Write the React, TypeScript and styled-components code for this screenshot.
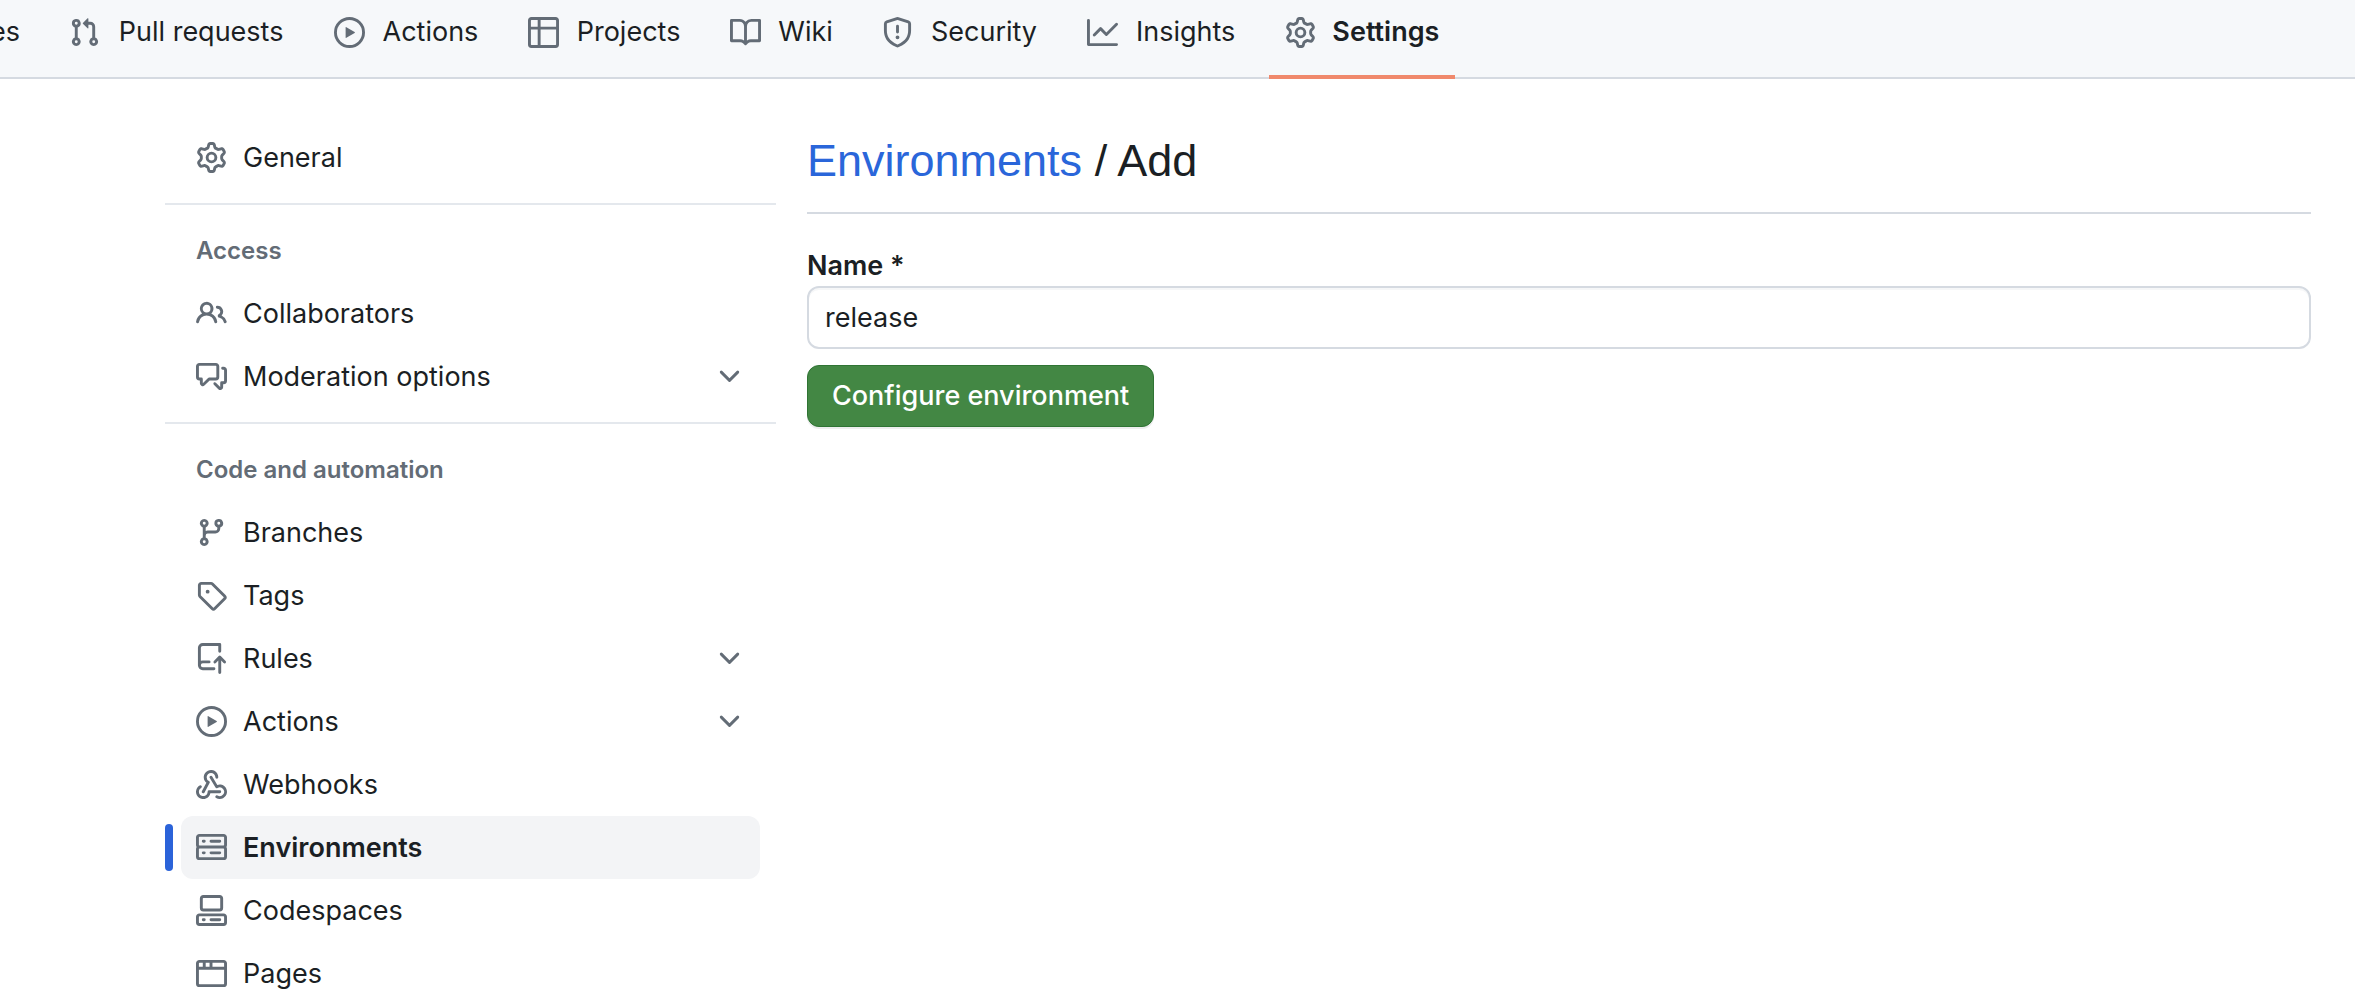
import React, { useState } from "react";
import styled, { createGlobalStyle } from "styled-components";

const color = {
  text: "#1b1f24",
  muted: "#636c76",
  canvas: "#ffffff",
  subtle: "#f6f8fa",
  selected: "#f3f4f6",
  border: "#d5dae1",
  borderMuted: "#e4e8ed",
  link: "#2a66da",
  accent: "#2b63d9",
  underline: "#f0896c",
  primary: "#438744",
};

const GlobalStyle = createGlobalStyle`
  *, *::before, *::after { box-sizing: border-box; }
  body {
    margin: 0;
    background: ${color.canvas};
    color: ${color.text};
    font-family: Inter, "Liberation Sans", sans-serif;
    font-size: 27px;
    line-height: 40px;
    overflow: hidden;
  }
`;

const paths = {
  issue:
    "M8 9.5a1.5 1.5 0 1 0 0-3 1.5 1.5 0 0 0 0 3Z M8 0a8 8 0 1 1 0 16A8 8 0 0 1 8 0ZM1.5 8a6.5 6.5 0 1 0 13 0 6.5 6.5 0 0 0-13 0Z",
  pull:
    "M1.5 3.25a2.25 2.25 0 1 1 3 2.122v5.256a2.251 2.251 0 1 1-1.5 0V5.372A2.25 2.25 0 0 1 1.5 3.25Zm5.677-.177L9.573.677A.25.25 0 0 1 10 .854V2.5h1A2.5 2.5 0 0 1 13.5 5v5.628a2.251 2.251 0 1 1-1.5 0V5a1 1 0 0 0-1-1h-1v1.646a.25.25 0 0 1-.427.177L7.177 3.427a.25.25 0 0 1 0-.354ZM3.75 2.5a.75.75 0 1 0 0 1.5.75.75 0 0 0 0-1.5Zm0 9.5a.75.75 0 1 0 0 1.5.75.75 0 0 0 0-1.5Zm8.25.75a.75.75 0 1 0 1.5 0 .75.75 0 0 0-1.5 0Z",
  play:
    "M8 0a8 8 0 1 1 0 16A8 8 0 0 1 8 0ZM1.5 8a6.5 6.5 0 1 0 13 0 6.5 6.5 0 0 0-13 0Zm4.879-2.773 4.264 2.559a.25.25 0 0 1 0 .428l-4.264 2.559A.25.25 0 0 1 6 10.559V5.442a.25.25 0 0 1 .379-.215Z",
  table:
    "M0 1.75C0 .784.784 0 1.75 0h12.5C15.216 0 16 .784 16 1.75v12.5A1.75 1.75 0 0 1 14.25 16H1.75A1.75 1.75 0 0 1 0 14.25ZM6.5 6.5v8h7.75a.25.25 0 0 0 .25-.25V6.5Zm8-1.5V1.75a.25.25 0 0 0-.25-.25H6.5V5Zm-13 1.5v7.75c0 .138.112.25.25.25H5v-8ZM5 5V1.5H1.75a.25.25 0 0 0-.25.25V5Z",
  book:
    "M0 1.75A.75.75 0 0 1 .75 1h4.253c1.227 0 2.317.59 3 1.501A3.743 3.743 0 0 1 11.006 1h4.245a.75.75 0 0 1 .75.75v10.5a.75.75 0 0 1-.75.75h-4.507a2.25 2.25 0 0 0-1.591.659l-.622.621a.75.75 0 0 1-1.06 0l-.622-.621A2.25 2.25 0 0 0 5.258 13H.75a.75.75 0 0 1-.75-.75Zm7.251 10.324.004-5.073-.002-2.253A2.25 2.25 0 0 0 5.003 2.5H1.5v9h3.757a3.75 3.75 0 0 1 1.994.574ZM8.755 4.75l-.004 7.322a3.752 3.752 0 0 1 1.992-.572H14.5v-9h-3.495a2.25 2.25 0 0 0-2.25 2.25Z",
  shield:
    "M7.467.133a1.748 1.748 0 0 1 1.066 0l5.25 1.68A1.75 1.75 0 0 1 15 3.48V7c0 1.566-.32 3.182-1.303 4.682-.983 1.498-2.585 2.813-5.032 3.855a1.697 1.697 0 0 1-1.33 0c-2.447-1.042-4.049-2.357-5.032-3.855C1.32 10.182 1 8.566 1 7V3.48a1.75 1.75 0 0 1 1.217-1.667Zm.61 1.429a.25.25 0 0 0-.153 0l-5.25 1.68a.25.25 0 0 0-.174.238V7c0 1.358.275 2.666 1.057 3.86.784 1.194 2.121 2.34 4.366 3.297a.196.196 0 0 0 .154 0c2.245-.956 3.582-2.104 4.366-3.298C13.225 9.666 13.5 8.36 13.5 7V3.48a.251.251 0 0 0-.174-.237l-5.25-1.68ZM8.75 4.75v3a.75.75 0 0 1-1.5 0v-3a.75.75 0 0 1 1.5 0ZM9 10.5a1 1 0 1 1-2 0 1 1 0 0 1 2 0Z",
  graph:
    "M1.5 1.75V13.5h13.75a.75.75 0 0 1 0 1.5H.75a.75.75 0 0 1-.75-.75V1.75a.75.75 0 0 1 1.5 0Zm14.28 2.53-5.25 5.25a.75.75 0 0 1-1.06 0L7 7.06 4.28 9.78a.751.751 0 0 1-1.042-.018.751.751 0 0 1-.018-1.042l3.25-3.25a.75.75 0 0 1 1.06 0L10 7.94l4.72-4.72a.751.751 0 0 1 1.042.018.751.751 0 0 1 .018 1.042Z",
  gear:
    "M8 0a8.2 8.2 0 0 1 .701.031C9.444.095 9.99.645 10.16 1.29l.288 1.107c.018.066.079.158.212.224.231.114.454.243.668.386.123.082.233.09.299.071l1.103-.303c.644-.176 1.392.021 1.82.63.27.385.506.792.704 1.218.315.675.111 1.422-.364 1.891l-.814.806c-.049.048-.098.147-.088.294.016.257.016.515 0 .772-.01.147.038.246.088.294l.814.806c.475.469.679 1.216.364 1.891a7.977 7.977 0 0 1-.704 1.217c-.428.61-1.176.807-1.82.63l-1.102-.302c-.067-.019-.177-.011-.3.071a5.909 5.909 0 0 1-.668.386c-.133.066-.194.158-.211.224l-.29 1.106c-.168.646-.715 1.196-1.458 1.26a8.006 8.006 0 0 1-1.402 0c-.743-.064-1.289-.614-1.458-1.26l-.289-1.106c-.018-.066-.079-.158-.212-.224a5.738 5.738 0 0 1-.668-.386c-.123-.082-.233-.09-.299-.071l-1.103.303c-.644.176-1.392-.021-1.82-.63a8.12 8.12 0 0 1-.704-1.218c-.315-.675-.111-1.422.363-1.891l.815-.806c.05-.048.098-.147.088-.294a6.214 6.214 0 0 1 0-.772c.01-.147-.038-.246-.088-.294l-.815-.806C.635 6.045.431 5.298.746 4.623a7.92 7.92 0 0 1 .704-1.217c.428-.61 1.176-.807 1.82-.63l1.102.302c.067.019.177.011.3-.071.214-.143.437-.272.668-.386.133-.066.194-.158.211-.224l.29-1.106C6.009.645 6.556.095 7.299.03 7.53.01 7.764 0 8 0Zm-.571 1.525c-.036.003-.108.036-.137.146l-.289 1.105c-.147.561-.549.967-.998 1.189-.173.086-.34.183-.5.29-.417.278-.97.423-1.529.27l-1.103-.303c-.109-.03-.175.016-.195.045-.22.312-.412.644-.573.99-.014.031-.021.11.059.19l.815.806c.411.406.562.957.53 1.456a4.709 4.709 0 0 0 0 .582c.032.499-.119 1.05-.53 1.456l-.815.806c-.081.08-.073.159-.059.19.162.346.353.677.573.989.02.03.085.076.195.046l1.102-.303c.56-.153 1.113-.008 1.53.27.161.107.328.204.501.29.447.222.85.629.997 1.189l.289 1.105c.029.109.101.143.137.146a6.6 6.6 0 0 0 1.142 0c.036-.003.108-.036.137-.146l.289-1.105c.147-.561.549-.967.998-1.189.173-.086.34-.183.5-.29.417-.278.97-.423 1.529-.27l1.103.303c.109.029.175-.016.195-.045.22-.313.411-.644.573-.99.014-.031.021-.11-.059-.19l-.815-.806c-.411-.406-.562-.957-.53-1.456a4.709 4.709 0 0 0 0-.582c-.032-.499.119-1.05.53-1.456l.815-.806c.081-.08.073-.159.059-.19a6.464 6.464 0 0 0-.573-.989c-.02-.03-.085-.076-.195-.046l-1.102.303c-.56.153-1.113.008-1.53-.27a4.44 4.44 0 0 0-.501-.29c-.447-.222-.85-.629-.997-1.189l-.289-1.105c-.029-.11-.101-.143-.137-.146a6.6 6.6 0 0 0-1.142 0ZM11 8a3 3 0 1 1-6 0 3 3 0 0 1 6 0ZM9.5 8a1.5 1.5 0 1 0-3.001.001A1.5 1.5 0 0 0 9.5 8Z",
  people:
    "M2 5.5a3.5 3.5 0 1 1 5.898 2.549 5.508 5.508 0 0 1 3.034 4.084.75.75 0 1 1-1.482.235 4 4 0 0 0-7.9 0 .75.75 0 0 1-1.482-.236A5.507 5.507 0 0 1 3.102 8.05 3.493 3.493 0 0 1 2 5.5ZM11 4a3.001 3.001 0 0 1 2.22 5.018 5.01 5.01 0 0 1 2.56 3.012.749.749 0 0 1-.885.954.752.752 0 0 1-.549-.514 3.507 3.507 0 0 0-2.522-2.372.75.75 0 0 1-.574-.73v-.352a.75.75 0 0 1 .416-.672A1.5 1.5 0 0 0 11 5.5.75.75 0 0 1 11 4Zm-5.5-.5a2 2 0 1 0-.001 3.999A2 2 0 0 0 5.5 3.5Z",
  discussion:
    "M1.75 1h8.5c.966 0 1.75.784 1.75 1.75v5.5A1.75 1.75 0 0 1 10.25 10H7.061l-2.574 2.573A1.458 1.458 0 0 1 2 11.543V10h-.25A1.75 1.75 0 0 1 0 8.25v-5.5C0 1.784.784 1 1.75 1ZM1.5 2.75v5.5c0 .138.112.25.25.25h1a.75.75 0 0 1 .75.75v2.19l2.72-2.72a.749.749 0 0 1 .53-.22h3.5a.25.25 0 0 0 .25-.25v-5.5a.25.25 0 0 0-.25-.25h-8.5a.25.25 0 0 0-.25.25Zm13 2a.25.25 0 0 0-.25-.25h-.5a.75.75 0 0 1 0-1.5h.5c.966 0 1.75.784 1.75 1.75v5.5A1.75 1.75 0 0 1 14.25 12H14v1.543a1.458 1.458 0 0 1-2.487 1.03L9.22 12.28a.749.749 0 0 1 .326-1.275.749.749 0 0 1 .734.215l2.22 2.22v-2.19a.75.75 0 0 1 .75-.75h1a.25.25 0 0 0 .25-.25Z",
  branch:
    "M9.5 3.25a2.25 2.25 0 1 1 3 2.122V6A2.5 2.5 0 0 1 10 8.5H6a1 1 0 0 0-1 1v1.128a2.251 2.251 0 1 1-1.5 0V5.372a2.25 2.25 0 1 1 1.5 0v1.836A2.493 2.493 0 0 1 6 7h4a1 1 0 0 0 1-1v-.628A2.25 2.25 0 0 1 9.5 3.25Zm-6 0a.75.75 0 1 0 1.5 0 .75.75 0 0 0-1.5 0Zm8.25-.75a.75.75 0 1 0 0 1.5.75.75 0 0 0 0-1.5ZM4.25 12a.75.75 0 1 0 0 1.5.75.75 0 0 0 0-1.5Z",
  tag:
    "M1 7.775V2.75C1 1.784 1.784 1 2.75 1h5.025c.464 0 .91.184 1.238.513l6.25 6.25a1.75 1.75 0 0 1 0 2.474l-5.026 5.026a1.75 1.75 0 0 1-2.474 0l-6.25-6.25A1.752 1.752 0 0 1 1 7.775Zm1.5 0c0 .066.026.13.073.177l6.25 6.25a.25.25 0 0 0 .354 0l5.025-5.025a.25.25 0 0 0 0-.354l-6.25-6.25a.25.25 0 0 0-.177-.073H2.75a.25.25 0 0 0-.25.25ZM6 5a1 1 0 1 1 0 2 1 1 0 0 1 0-2Z",
  push:
    "M1 2.5A2.5 2.5 0 0 1 3.5 0h8.75a.75.75 0 0 1 .75.75v3.5a.75.75 0 0 1-1.5 0V1.5h-8a1 1 0 0 0-1 1v6.708A2.493 2.493 0 0 1 3.5 9h3.25a.75.75 0 0 1 0 1.5H3.5a1 1 0 0 0 0 2h5.75a.75.75 0 0 1 0 1.5H3.5A2.5 2.5 0 0 1 1 11.5Zm13.23 7.79h-.001l-1.224-1.224v6.184a.75.75 0 0 1-1.5 0V9.066L10.28 10.29a.75.75 0 0 1-1.06-1.061l2.505-2.504a.75.75 0 0 1 1.06 0L15.29 9.23a.751.751 0 0 1-.018 1.042.751.751 0 0 1-1.042.018Z",
  webhook:
    "M5.5 4.25a2.25 2.25 0 0 1 4.5 0 .75.75 0 0 0 1.5 0 3.75 3.75 0 1 0-6.14 2.889l-2.272 4.258a.75.75 0 0 0 1.324.706L7 7.25a.75.75 0 0 0-.309-1.015A2.25 2.25 0 0 1 5.5 4.25Z M7.364 3.607a.75.75 0 0 1 1.03.257l2.608 4.349a3.75 3.75 0 1 1-.628 6.785.75.75 0 0 1 .752-1.299 2.25 2.25 0 1 0-.033-3.88.75.75 0 0 1-1.03-.256L7.107 4.636a.75.75 0 0 1 .257-1.03Z M2.9 8.776A.75.75 0 0 1 2.625 9.8 2.25 2.25 0 1 0 6 11.75a.75.75 0 0 1 .75-.751h5.5a.75.75 0 0 1 0 1.5H7.425a3.751 3.751 0 1 1-5.55-3.998.75.75 0 0 1 1.024.274Z",
  server:
    "M1.75 1h12.5c.966 0 1.75.784 1.75 1.75v4c0 .372-.116.717-.314 1 .198.283.314.628.314 1v4a1.75 1.75 0 0 1-1.75 1.75H1.75A1.75 1.75 0 0 1 0 12.75v-4c0-.358.109-.707.314-1a1.739 1.739 0 0 1-.314-1v-4C0 1.784.784 1 1.75 1ZM1.5 2.75v4c0 .138.112.25.25.25h12.5a.25.25 0 0 0 .25-.25v-4a.25.25 0 0 0-.25-.25H1.75a.25.25 0 0 0-.25.25Zm.25 5.75a.25.25 0 0 0-.25.25v4c0 .138.112.25.25.25h12.5a.25.25 0 0 0 .25-.25v-4a.25.25 0 0 0-.25-.25ZM7 4.75A.75.75 0 0 1 7.75 4h4.5a.75.75 0 0 1 0 1.5h-4.5A.75.75 0 0 1 7 4.75ZM7.75 10h4.5a.75.75 0 0 1 0 1.5h-4.5a.75.75 0 0 1 0-1.5ZM3 4.75A.75.75 0 0 1 3.75 4h.5a.75.75 0 0 1 0 1.5h-.5A.75.75 0 0 1 3 4.75ZM3.75 10h.5a.75.75 0 0 1 0 1.5h-.5a.75.75 0 0 1 0-1.5Z",
  codespaces:
    "M0 11.25c0-.966.784-1.75 1.75-1.75h12.5c.966 0 1.75.784 1.75 1.75v3A1.75 1.75 0 0 1 14.25 16H1.75A1.75 1.75 0 0 1 0 14.25Zm2-9.5C2 .784 2.784 0 3.75 0h8.5C13.216 0 14 .784 14 1.75v5a1.75 1.75 0 0 1-1.75 1.75h-8.5A1.75 1.75 0 0 1 2 6.75Zm1.75-.25a.25.25 0 0 0-.25.25v5c0 .138.112.25.25.25h8.5a.25.25 0 0 0 .25-.25v-5a.25.25 0 0 0-.25-.25Zm-2 9.5a.25.25 0 0 0-.25.25v3c0 .138.112.25.25.25h12.5a.25.25 0 0 0 .25-.25v-3a.25.25 0 0 0-.25-.25Z M7 12.75a.75.75 0 0 1 .75-.75h4.5a.75.75 0 0 1 0 1.5h-4.5a.75.75 0 0 1-.75-.75Zm-4 0a.75.75 0 0 1 .75-.75h.5a.75.75 0 0 1 0 1.5h-.5a.75.75 0 0 1-.75-.75Z",
  browser:
    "M0 2.75C0 1.784.784 1 1.75 1h12.5c.966 0 1.75.784 1.75 1.75v10.5A1.75 1.75 0 0 1 14.25 15H1.75A1.75 1.75 0 0 1 0 13.25ZM14.5 6h-13v7.25c0 .138.112.25.25.25h12.5a.25.25 0 0 0 .25-.25Zm-6-3.5v2h6V2.75a.25.25 0 0 0-.25-.25ZM5 2.5v2h2v-2Zm-3.25 0a.25.25 0 0 0-.25.25V4.5h2v-2Z",
  chevron:
    "M12.78 5.22a.749.749 0 0 1 0 1.06l-4.25 4.25a.749.749 0 0 1-1.06 0L3.22 6.28a.749.749 0 1 1 1.06-1.06L8 8.939l3.72-3.719a.749.749 0 0 1 1.06 0Z",
};

type IconName = keyof typeof paths;

const Svg = styled.svg`
  flex: none;
  width: 31px;
  height: 31px;
  fill: ${color.muted};
`;

const Icon = ({ name }: { name: IconName }) => (
  <Svg viewBox="0 0 16 16" aria-hidden="true">
    <path d={paths[name]} />
  </Svg>
);

const Header = styled.header`
  background: ${color.subtle};
  border-bottom: 2px solid ${color.border};
`;

const TabList = styled.ul`
  display: flex;
  gap: 16px;
  margin: 0 0 -2px -126px;
  padding: 0;
  list-style: none;
`;

const Tab = styled.a<{ $current?: boolean }>`
  display: flex;
  align-items: center;
  gap: 16px;
  padding: 12px 16px 23px;
  border-bottom: 4px solid ${(p) => (p.$current ? color.underline : "transparent")};
  color: ${color.text};
  font-weight: ${(p) => (p.$current ? 600 : 400)};
  text-decoration: none;
  white-space: nowrap;
`;

/* Reserves the width of the bold label, so tabs keep their place when selected. */
const TabLabel = styled.span`
  display: grid;
  justify-items: center;

  &::after {
    content: attr(data-content);
    height: 0;
    overflow: hidden;
    visibility: hidden;
    font-weight: 600;
  }
`;

const Layout = styled.div`
  display: grid;
  grid-template-columns: 611px minmax(0, 1fr);
  column-gap: 31px;
  padding: 47px 44px 0 165px;
`;

const Sidebar = styled.nav`
  display: flex;
  flex-direction: column;
`;

const Section = styled.section`
  & + & {
    margin-top: 14px;
    padding-top: 15px;
    border-top: 2px solid ${color.borderMuted};
  }
`;

const SectionTitle = styled.h2`
  margin: 0;
  padding: 0 31px;
  color: ${color.muted};
  font-size: 24px;
  font-weight: 600;
  line-height: 62px;
`;

const NavList = styled.ul`
  margin: 0;
  padding: 0 16px;
  list-style: none;
`;

const NavItem = styled.li`
  position: relative;
`;

const Marker = styled.span`
  position: absolute;
  top: 8px;
  bottom: 8px;
  left: -16px;
  width: 8px;
  border-radius: 4px;
  background: ${color.accent};
`;

const NavLink = styled.a<{ $current?: boolean }>`
  display: flex;
  align-items: center;
  gap: 16px;
  height: 63px;
  padding: 0 15px;
  border-radius: 12px;
  background: ${(p) => (p.$current ? color.selected : "transparent")};
  color: ${color.text};
  font-weight: ${(p) => (p.$current ? 600 : 400)};
  text-decoration: none;
`;

const NavButton = styled(NavLink).attrs({ as: "button", type: "button" })`
  width: 100%;
  border: 0;
  font-family: inherit;
  font-size: inherit;
  line-height: inherit;
  text-align: left;
`;

const NavLabel = styled.span`
  flex: 1;
`;

const Title = styled.h1`
  margin: 0 0 32px;
  padding-bottom: 16px;
  border-bottom: 2px solid ${color.border};
  font-family: "Liberation Sans", Arial, sans-serif;
  font-size: 45px;
  font-weight: 400;
  line-height: 70px;

  a {
    color: ${color.link};
    text-decoration: none;
  }
`;

const Form = styled.form`
  display: flex;
  flex-direction: column;
  align-items: flex-start;
`;

const Label = styled.label`
  font-weight: 600;
`;

const TextInput = styled.input`
  width: 100%;
  height: 63px;
  margin-bottom: 16px;
  padding: 0 16px;
  border: 2px solid ${color.border};
  border-radius: 12px;
  background: ${color.canvas};
  box-shadow: inset 0 2px 0 rgba(208, 215, 222, 0.2);
  color: ${color.text};
  font: inherit;
  outline: none;
`;

const SubmitButton = styled.button`
  height: 62px;
  padding: 0 24px;
  border: 1px solid #2f7434;
  border-radius: 12px;
  background: ${color.primary};
  box-shadow: 0 2px 0 rgba(31, 35, 40, 0.08);
  color: #ffffff;
  font: inherit;
  font-weight: 500;
`;

type Entry = { label: string; icon: IconName; current?: boolean; expandable?: boolean };

const tabs: Entry[] = [
  { label: "Issues", icon: "issue" },
  { label: "Pull requests", icon: "pull" },
  { label: "Actions", icon: "play" },
  { label: "Projects", icon: "table" },
  { label: "Wiki", icon: "book" },
  { label: "Security", icon: "shield" },
  { label: "Insights", icon: "graph" },
  { label: "Settings", icon: "gear", current: true },
];

const sections: { title?: string; items: Entry[] }[] = [
  { items: [{ label: "General", icon: "gear" }] },
  {
    title: "Access",
    items: [
      { label: "Collaborators", icon: "people" },
      { label: "Moderation options", icon: "discussion", expandable: true },
    ],
  },
  {
    title: "Code and automation",
    items: [
      { label: "Branches", icon: "branch" },
      { label: "Tags", icon: "tag" },
      { label: "Rules", icon: "push", expandable: true },
      { label: "Actions", icon: "play", expandable: true },
      { label: "Webhooks", icon: "webhook" },
      { label: "Environments", icon: "server", current: true },
      { label: "Codespaces", icon: "codespaces" },
      { label: "Pages", icon: "browser" },
    ],
  },
];

const SidebarEntry = ({ label, icon, current, expandable }: Entry) => (
  <NavItem>
    {current && <Marker />}
    {expandable ? (
      <NavButton aria-expanded={false}>
        <Icon name={icon} />
        <NavLabel>{label}</NavLabel>
        <Icon name="chevron" />
      </NavButton>
    ) : (
      <NavLink href="#" $current={current} aria-current={current ? "page" : undefined}>
        <Icon name={icon} />
        <NavLabel>{label}</NavLabel>
      </NavLink>
    )}
  </NavItem>
);

export default function App() {
  const [name, setName] = useState("release");

  return (
    <>
      <GlobalStyle />
      <Header>
        <nav aria-label="Repository">
          <TabList>
            {tabs.map((tab) => (
              <li key={tab.label}>
                <Tab href="#" $current={tab.current} aria-current={tab.current ? "page" : undefined}>
                  <Icon name={tab.icon} />
                  <TabLabel data-content={tab.label}>{tab.label}</TabLabel>
                </Tab>
              </li>
            ))}
          </TabList>
        </nav>
      </Header>
      <Layout>
        <Sidebar aria-label="Repository settings">
          {sections.map((section, index) => (
            <Section key={index}>
              {section.title && <SectionTitle>{section.title}</SectionTitle>}
              <NavList>
                {section.items.map((item) => (
                  <SidebarEntry key={item.label} {...item} />
                ))}
              </NavList>
            </Section>
          ))}
        </Sidebar>
        <main>
          <Title>
            <a href="#">Environments</a> / Add
          </Title>
          <Form onSubmit={(event) => event.preventDefault()}>
            <Label htmlFor="environment-name">Name *</Label>
            <TextInput
              id="environment-name"
              type="text"
              value={name}
              onChange={(event) => setName(event.target.value)}
            />
            <SubmitButton type="submit">Configure environment</SubmitButton>
          </Form>
        </main>
      </Layout>
    </>
  );
}
